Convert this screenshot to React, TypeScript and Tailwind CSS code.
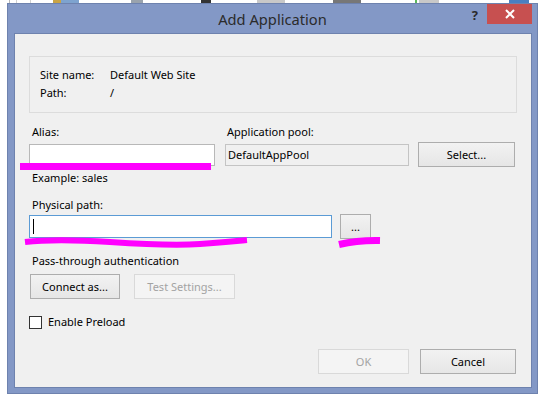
import React from 'react';

const font = { fontFamily: '"Noto Sans", "Liberation Sans", sans-serif' };

const Btn: React.FC<{ label: string; w: string; disabled?: boolean }> = ({ label, w, disabled }) => (
  <div
    className={`${w} h-[25px] flex items-center justify-center border text-[11px] ${
      disabled
        ? 'border-[#d9d9d9] bg-[#f4f4f4] text-[#a3a3a3]'
        : 'border-[#adadad] bg-gradient-to-b from-[#f2f2f2] to-[#e6e6e6] text-black'
    }`}
  >
    {label}
  </div>
);

export default function App() {
  return (
    <div className="relative w-[543px] h-[396px] bg-white overflow-hidden" style={font}>
      {/* bits of the window behind */}
      <div className="flex h-[3px] items-stretch">
        <div className="ml-[9px] w-px bg-[#b8b8b8]" />
        <div className="ml-[6px] w-px bg-[#d0d0d0]" />
        <div className="ml-[13px] w-px bg-[#d0d0d0]" />
        <div className="ml-[22px] w-[8px] bg-[#c9a445]" />
        <div className="w-[18px] bg-[#7ea3cf]" />
        <div className="ml-[52px] w-[12px] bg-[#9aa3ad]" />
        <div className="ml-[58px] w-[10px] bg-[#333]" />
        <div className="ml-[46px] w-[28px] bg-[#c8c8c8]" />
        <div className="ml-[48px] w-[28px] bg-[#777]" />
        <div className="ml-[54px] w-[2px] bg-[#5cb85c]" />
        <div className="ml-[2px] w-[20px] bg-[#c8c8c8]" />
        <div className="ml-[70px] w-[20px] bg-[#4a7fc1]" />
      </div>

      {/* dialog window */}
      <div className="ml-[7px] w-[531px] h-[391px] bg-[#8398c6] border border-[#6e82ae] flex flex-col">
        <div className="h-[29px] grid grid-cols-[1fr_auto_1fr]">
          <div />
          <div className="pt-[4px] text-[14.7px] text-[#2b2b2b]">Add Application</div>
          <div className="flex justify-end items-start">
            <div className="mt-[5px] mr-[9px] text-[13px] leading-[13px] font-bold text-[#2b2b2b]">?</div>
            <div className="w-[45px] h-[20px] bg-[#c75050] flex items-center justify-center mr-[5px]">
              <svg width="10" height="10" viewBox="0 0 10 10">
                <path d="M1 1 L9 9 M9 1 L1 9" stroke="white" strokeWidth="2" />
              </svg>
            </div>
          </div>
        </div>

        <div className="ml-[6px] mr-[5px] h-[355px] bg-[#f0f0f0] border border-[#6e82ae] flex flex-col px-[14px] text-[11px] leading-[16px] text-black">
          <div className="mt-[22px] h-[57px] border border-[#dcdcdc] pl-[10px] pt-[9px] grid grid-cols-[70px_1fr] auto-rows-[18px] items-center">
            <span>Site name:</span>
            <span>Default Web Site</span>
            <span>Path:</span>
            <span>/</span>
          </div>

          <div className="mt-[11px] flex">
            <span className="ml-[3px] w-[195px]">Alias:</span>
            <span>Application pool:</span>
          </div>
          <div className="mt-[2px] flex items-center">
            <div className="w-[186px] h-[22px] bg-white border border-[#b8b8b8]" />
            <div className="ml-[10px] w-[184px] h-[22px] border border-[#c4c4c4] bg-[#f0f0f0] flex items-center pl-[2px]">
              DefaultAppPool
            </div>
            <div className="ml-[9px]">
              <Btn label="Select..." w="w-[97px]" />
            </div>
          </div>
          <span className="ml-[3px] mt-[3px]">Example: sales</span>

          <span className="ml-[3px] mt-[11px]">Physical path:</span>
          <div className="mt-[1px] flex items-center">
            <div className="w-[303px] h-[23px] bg-white border border-[#5b9bd5] flex items-center pl-[3px]">
              <div className="w-px h-[15px] bg-black" />
            </div>
            <div className="ml-[8px]">
              <Btn label="..." w="w-[31px]" />
            </div>
          </div>

          <span className="ml-[3px] mt-[14px]">Pass-through authentication</span>
          <div className="mt-[5px] flex gap-[14px] pl-px">
            <Btn label="Connect as..." w="w-[90px]" />
            <Btn label="Test Settings..." w="w-[101px]" disabled />
          </div>

          <div className="mt-[15px] flex items-center h-[16px]">
            <div className="w-[13px] h-[13px] bg-white border border-[#333]" />
            <span className="ml-[6px]">Enable Preload</span>
          </div>

          <div className="mt-[19px] flex justify-end gap-[11px] pr-px">
            <Btn label="OK" w="w-[91px]" disabled />
            <Btn label="Cancel" w="w-[96px]" />
          </div>
        </div>
      </div>

      {/* highlighter marks drawn over the screenshot */}
      <svg className="absolute inset-0 pointer-events-none" width="543" height="396">
        <path d="M20 166.5 L211 166.5" stroke="#ff00ff" strokeWidth="7" fill="none" />
        <path
          d="M25 242 C 50 239, 80 240, 110 242 S 170 246, 200 244 S 235 241, 247 240"
          stroke="#ff00ff"
          strokeWidth="6"
          fill="none"
        />
        <path d="M339 244.5 Q 358 240, 380 240.5" stroke="#ff00ff" strokeWidth="7" fill="none" />
      </svg>
    </div>
  );
}
